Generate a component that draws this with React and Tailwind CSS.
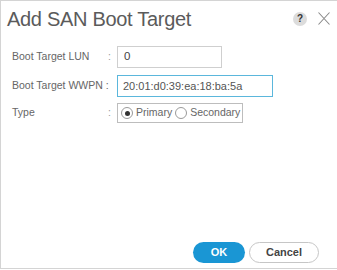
import { useState } from 'react';

export default function App() {
    const [type, setType] = useState('primary');

    return (
        <div className="w-[337px] h-[270px] bg-white" style={{ fontFamily: '"Liberation Sans", Arial, sans-serif' }}>
            <div className="w-[337px] h-[269px] border border-[#d4d4d4] border-r-0 flex flex-col">
                {/* Header */}
                <div className="flex items-center justify-between pl-[6px] pr-[6px] pt-[4px] h-[31px]">
                    <h2 className="text-[20px] leading-none text-[#5b5b5b] tracking-[-0.3px]">Add SAN Boot Target</h2>
                    <div className="flex items-center gap-[11px]">
                        <div className="w-[14px] h-[14px] rounded-full bg-[#dcdcdc] flex items-center justify-center text-[10px] font-bold text-[#333] leading-none">?</div>
                        <svg width="12" height="13" viewBox="0 0 12 13" className="mr-[1px]">
                            <path d="M0.5 0.5 L11.5 12.5 M11.5 0.5 L0.5 12.5" stroke="#8a8a8a" strokeWidth="1.1" fill="none" />
                        </svg>
                    </div>
                </div>

                {/* Form */}
                <div className="flex flex-col pl-[11px] pt-[14px] text-[10.5px] text-[#666]">
                    <div className="flex items-center h-[22px]">
                        <span className="w-[96px]">Boot Target LUN</span>
                        <span className="w-[9px] text-[#999]">:</span>
                        <div className="w-[105px] h-[22px] border border-[#cfcfcf] flex items-center pl-[6px] text-[11.5px] text-[#444]">0</div>
                    </div>
                    <div className="flex items-center h-[22px] mt-[7px]">
                        <span className="w-[96px] whitespace-nowrap">Boot Target WWPN :</span>
                        <span className="w-[9px]" />
                        <div className="w-[156px] h-[22px] border border-[#5bb7dc] flex items-center pl-[5px] text-[11px] text-[#555]">20:01:d0:39:ea:18:ba:5a</div>
                    </div>
                    <div className="flex items-center h-[20px] mt-[6px]">
                        <span className="w-[96px]">Type</span>
                        <span className="w-[9px] text-[#999]">:</span>
                        <div className="w-[126px] h-[20px] border border-[#bdbdbd] flex items-center pl-[3px] gap-[3px] text-[10.5px] text-[#666]">
                            <button onClick={() => setType('primary')} className="flex items-center gap-[3px]">
                                <span className="w-[12px] h-[12px] rounded-full border border-[#9a9a9a] flex items-center justify-center">
                                    {type === 'primary' && <span className="w-[5px] h-[5px] rounded-full bg-[#333]" />}
                                </span>
                                <span>Primary</span>
                            </button>
                            <button onClick={() => setType('secondary')} className="flex items-center gap-[3px]">
                                <span className="w-[12px] h-[12px] rounded-full border border-[#9a9a9a] flex items-center justify-center">
                                    {type === 'secondary' && <span className="w-[5px] h-[5px] rounded-full bg-[#333]" />}
                                </span>
                                <span>Secondary</span>
                            </button>
                        </div>
                    </div>
                </div>

                {/* Footer */}
                <div className="mt-auto flex justify-end gap-[4px] pr-[18px] pb-[5px]">
                    <button className="w-[52px] h-[21px] rounded-full bg-[#1a96d4] text-white text-[11px] font-bold">OK</button>
                    <button className="w-[70px] h-[21px] rounded-full bg-white border border-[#c6c6c6] text-[#444] text-[11px] font-bold">Cancel</button>
                </div>
            </div>
        </div>
    );
}
